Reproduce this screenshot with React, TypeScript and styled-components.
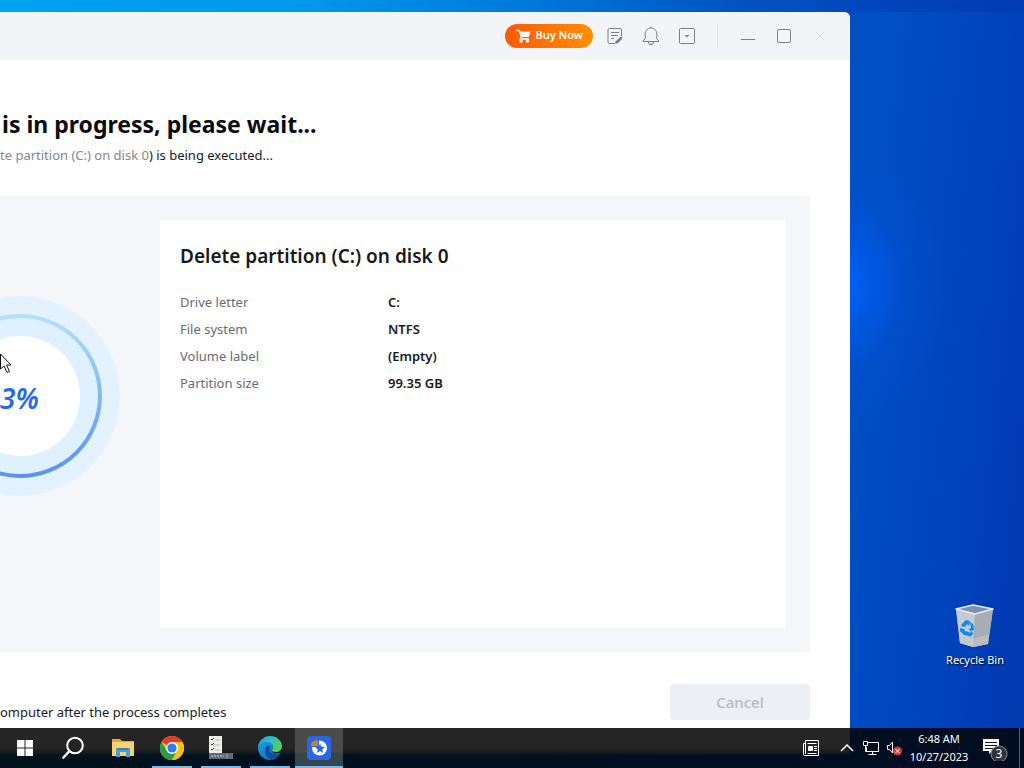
import React from "react";
import styled, { createGlobalStyle } from "styled-components";

const GlobalStyle = createGlobalStyle`
  *, *::before, *::after { box-sizing: border-box; }
  body { margin: 0; font-family: "Noto Sans", "Open Sans", sans-serif; color: #17191c; }
  button { font: inherit; border: 0; padding: 0; background: none; color: inherit; }
  h1, h2, p, dl, dd, dt { margin: 0; }
  svg { display: block; flex: none; }
`;

const Desktop = styled.div`
  position: relative;
  display: flex;
  flex-direction: column;
  height: 100vh;
  overflow: hidden;
  background:
    linear-gradient(90deg, #00a2f0 0, #0098ea 30%, #0078da 52%, #0053c4 72%, #0046bc 85%, #003cb2) top / 100% 12px no-repeat,
    radial-gradient(ellipse 100px 140px at calc(100% - 178px) 285px, #0062fa 0, rgba(0, 92, 238, 0.75) 25%, rgba(0, 84, 220, 0.3) 60%, rgba(0, 80, 208, 0) 100%),
    linear-gradient(96deg, #0050c4 0, #0050c4 80%, #0046be 89%, #003bb4 97%, #003ab0 100%);
`;

const Workspace = styled.main`
  display: flex;
  flex: 1;
  min-height: 0;
  padding-top: 12px;
`;

const AppWindow = styled.section`
  display: flex;
  flex-direction: column;
  flex: 1;
  min-width: 0;
  overflow: hidden;
  background: #fff;
  border-radius: 0 6px 0 0;
`;

const TitleBar = styled.header`
  display: flex;
  flex: none;
  align-items: center;
  justify-content: flex-end;
  height: 48px;
  padding-right: 12px;
  background: #f3f4f7;
`;

const BuyButton = styled.button`
  display: flex;
  align-items: center;
  gap: 4px;
  height: 24px;
  margin-right: 4px;
  padding: 0 10px 0 11px;
  border-radius: 12px;
  background: linear-gradient(90deg, #ff5a05, #ff8f05);
  color: #fff;
  font-size: 11px;
  font-weight: 600;
  line-height: 14px;
`;

const BuyLabel = styled.span`
  padding-bottom: 2px;
`;

const TitleButton = styled.button`
  display: flex;
  align-items: center;
  justify-content: center;
  width: 36px;
  height: 36px;
  color: #7b7f87;
`;

const TitleDivider = styled.span`
  width: 1px;
  height: 24px;
  margin: 0 12px;
  background: #dfe1e6;
`;

const Content = styled.div`
  display: flex;
  flex: 1;
  flex-direction: column;
  min-height: 0;
  padding: 47px 40px 8px 0;
`;

const Title = styled.h1`
  padding-left: 2px;
  color: #0a0b0d;
  font-size: 23px;
  font-weight: 700;
  line-height: 34px;
  white-space: nowrap;
`;

const Subtitle = styled.p`
  margin: 2px 0 29px;
  font-size: 13px;
  line-height: 24px;
  white-space: nowrap;
`;

const Muted = styled.span`
  color: #83878e;
`;

const Panel = styled.div`
  display: grid;
  flex: 1;
  grid-template-columns: 136px 1fr;
  gap: 24px;
  min-height: 0;
  padding: 24px 24px 24px 0;
  background: #f4f6fa;
`;

const Progress = styled.div`
  display: grid;
  align-self: start;
  margin-top: 76px;
  align-items: center;

  > * { grid-area: 1 / 1; }
`;

const Percent = styled.span`
  padding-top: 4px;
  color: #2a6ae8;
  font-size: 28px;
  font-style: italic;
  font-weight: 600;
  line-height: 36px;
`;

const Card = styled.div`
  padding: 20px;
  background: #fff;
`;

const CardTitle = styled.h2`
  margin-bottom: 17px;
  font-size: 19px;
  font-weight: 600;
  line-height: 32px;
`;

const Details = styled.dl`
  display: grid;
  grid-template-columns: 208px 1fr;
  font-size: 13px;
  line-height: 27px;
`;

const Term = styled.dt`
  color: #686b70;
`;

const Value = styled.dd`
  font-weight: 600;
`;

const Footer = styled.footer`
  display: flex;
  flex: none;
  align-items: flex-end;
  justify-content: space-between;
  padding-top: 32px;
`;

const FooterNote = styled.p`
  font-size: 13px;
  line-height: 16px;
`;

const CancelButton = styled.button`
  width: 140px;
  height: 36px;
  border-radius: 4px;
  background: #eceff4;
  color: #b7bac0;
  font-size: 15px;
  font-weight: 500;
`;

const Shortcuts = styled.aside`
  display: flex;
  flex: none;
  align-items: flex-end;
  justify-content: flex-end;
  width: 174px;
  padding: 0 12px 60px;
`;

const Shortcut = styled.button`
  display: flex;
  flex-direction: column;
  align-items: center;
  gap: 4px;
  width: 74px;
  color: #fff;
  font-size: 11px;
  line-height: 16px;
  white-space: nowrap;
  text-shadow: 1px 1px 2px #000;
`;

const Taskbar = styled.nav`
  display: flex;
  flex: none;
  justify-content: space-between;
  height: 40px;
  padding-left: 1px;
  color: #fff;
  background:
    linear-gradient(#252525 0 20px, #141b1f 25px, transparent 27px) left / calc(100% - 174px) 100% no-repeat,
    linear-gradient(90deg, #00121c, #001020 60%, #010c20);
`;

const TaskGroup = styled.div`
  display: flex;
  gap: 1px;
`;

const TaskButton = styled.button<{ $running?: boolean; $active?: boolean }>`
  display: flex;
  align-items: center;
  justify-content: center;
  width: 48px;
  background: ${(p) => (p.$active ? "linear-gradient(#4b4b4b 24px, #36444c 25px)" : "none")};
  position: relative;

  &::after {
    content: "";
    position: absolute;
    bottom: 0;
    left: ${(p) => (p.$active ? 0 : "4px")};
    right: ${(p) => (p.$active ? 0 : "4px")};
    height: 2px;
    background: ${(p) => (p.$running || p.$active ? "#76b9ed" : "transparent")};
  }
`;

const Tray = styled.div`
  display: flex;
  align-items: center;
`;

const TrayButton = styled.button<{ $width: number }>`
  display: flex;
  align-items: center;
  justify-content: center;
  width: ${(p) => p.$width}px;
  height: 40px;
`;

const Clock = styled.button`
  width: 66px;
  padding-left: 2px;
  font-size: 11px;
  line-height: 18px;
  text-align: center;
  white-space: nowrap;
`;

const ShowDesktop = styled.button`
  width: 5px;
  height: 40px;
  border-left: 1px solid #5c626c;
`;

const Pointer = styled.div`
  position: absolute;
  top: 353px;
  left: 0;
`;

const details = [
  ["Drive letter", "C:"],
  ["File system", "NTFS"],
  ["Volume label", "(Empty)"],
  ["Partition size", "99.35 GB"],
];

const CartIcon = () => (
  <svg width="15" height="14" viewBox="0 0 15 14" fill="none" stroke="#fff" strokeWidth="1.400">
    <path d="M.5 1.500h2.700l2.300 6.800-1.200 1.700h8.700" />
    <path d="M3.500 2.500h11L12.700 8H5.500z" fill="#fff" stroke="none" />
    <circle cx="5" cy="12" r="1" />
    <circle cx="11.500" cy="12" r="1" />
  </svg>
);

const NoteIcon = () => (
  <svg width="18" height="18" viewBox="0 0 18 18" fill="none" stroke="currentColor">
    <path d="M9 16.500H3.500a1.500 1.500 0 0 1-1.500-1.500V3a1.500 1.500 0 0 1 1.500-1.500H14A1.500 1.500 0 0 1 15.500 3v6M5 5.500h8M5 8.500h7M5 11.500h3" />
    <path d="m16.500 9.500-.5 2.500-4.500 4.500H9l.5-2 5-4.500z" fill="currentColor" stroke="none" />
  </svg>
);

const BellIcon = () => (
  <svg width="18" height="20" viewBox="0 0 18 20" fill="none" stroke="currentColor">
    <path d="M9 .5v1.500M1 15.500h16l-2.200-3V8C14.800 4.500 12.500 2 9 2S3.200 4.500 3.200 8v4.500zM6.200 15.500a2.800 3.200 0 0 0 5.600 0" />
  </svg>
);

const MenuIcon = () => (
  <svg width="18" height="18" viewBox="0 0 18 18" fill="none" stroke="currentColor">
    <rect x="1.500" y="1.500" width="15" height="15" rx="1" />
    <path d="M6.500 8h5L9 10.500z" fill="currentColor" stroke="none" />
  </svg>
);

const ProgressRing = () => (
  <svg width="120" height="200" viewBox="0 0 120 200" role="img" aria-label="Progress">
    <defs>
      <linearGradient id="arc" x1="0" y1="0" x2="0" y2="1">
        <stop offset="0" stopColor="#b4e1fb" />
        <stop offset=".5" stopColor="#7fb7f5" />
        <stop offset="1" stopColor="#5b94ee" />
      </linearGradient>
    </defs>
    <circle cx="20" cy="100" r="100" fill="#e4f2fe" />
    <circle cx="20" cy="100" r="80" fill="#dff0fe" stroke="url(#arc)" strokeWidth="4" />
    <circle cx="20" cy="100" r="60" fill="#fff" />
  </svg>
);

const RecycleIcon = () => (
  <svg width="40" height="44" viewBox="0 0 40 44">
    <path d="M1 5 18 1l20 4-5 35-15 3-13-4z" fill="#a9b4c5" />
    <path d="m1 5 19 5-2 33-13-4z" fill="#c2cad6" />
    <path d="m20 10 18-5-5 35-15 3z" fill="#a6adb8" />
    <path d="m4 31 14 4 16-5-1 10-15 3-13-4z" fill="#c9c6bf" opacity=".6" />
    <path d="m1 5 17-4 20 4-18 5z" fill="#7c90aa" stroke="#e6ebf2" strokeWidth="1.500" strokeLinejoin="round" />
    <g fill="#1587dc">
      <path d="m7 20 4-4 4 1-1 5-2-2-2 3-4-1z" />
      <path d="m15 18 3 2 1 6-4 1-1-2 2-1z" />
      <path d="m5 24 4 1 1 2 4 1v4l-5-1-4-4z" />
      <path d="m13 30 4-3 1 3-3 3z" />
    </g>
  </svg>
);

const StartIcon = () => (
  <svg width="16" height="16" viewBox="0 0 16 16" fill="#fff">
    <path d="M0 0h7.500v7.500H0zM8.500 0H16v7.500H8.500zM0 8.500h7.500V16H0zM8.500 8.500H16V16H8.500z" />
  </svg>
);

const SearchIcon = () => (
  <svg width="24" height="24" viewBox="0 0 24 24" fill="none" stroke="#fff" strokeWidth="2">
    <circle cx="13" cy="9.500" r="7.800" />
    <path d="m7.500 15-7 7.500" strokeWidth="2.500" />
  </svg>
);

const FolderIcon = () => (
  <svg width="24" height="22" viewBox="0 0 24 22">
    <path d="M1 2h8l2 2h12v4H1z" fill="#e5a52f" />
    <path d="M1 5h22v14H1z" fill="#fbd269" />
    <path d="M5 20v-9h14v9h-4v-5H9v5z" fill="#489ed6" />
    <path d="M7 11h10v2H7z" fill="#3183bd" />
  </svg>
);

const ChromeIcon = () => (
  <svg width="24" height="24" viewBox="0 0 24 24">
    <circle cx="12" cy="12" r="12" fill="#fbc116" />
    <path d="M12 12 1.600 6A12 12 0 0 1 22.400 6H12z" fill="#e33b2e" />
    <path d="M1.600 6A12 12 0 0 0 12 24l5.200-9L12 12 7 15z" fill="#2b9d48" />
    <path d="M12 24a12 12 0 0 0 10.400-18H12l5.200 9z" fill="#fbc116" />
    <circle cx="12" cy="12" r="6" fill="#fff" />
    <circle cx="12" cy="12" r="4.600" fill="#2f7de9" />
  </svg>
);

const SetupIcon = () => (
  <svg width="24" height="24" viewBox="0 0 24 24">
    <path d="M0 0h13v17H0z" fill="#eeeeec" />
    <path d="m2 3 1 1 2-2M2 8l1 1 2-2M2 13l1 1 2-2" fill="none" stroke="#333" />
    <path d="M6 4h5M6 9h5M6 14h5" stroke="#b5b5b5" />
    <path d="M0 17h24v6H0z" fill="#626a76" />
    <path d="M2 20h13" stroke="#9a9fa8" strokeWidth="2" strokeDasharray="2 1" />
    <path d="M18 18v4" stroke="#a8adb5" />
  </svg>
);

const EdgeIcon = () => (
  <svg width="24" height="24" viewBox="0 0 24 24">
    <defs>
      <linearGradient id="edgeTop" x1="0" y1="0" x2="1" y2=".5">
        <stop offset="0" stopColor="#1c9de0" />
        <stop offset=".5" stopColor="#2bbfd0" />
        <stop offset="1" stopColor="#55cf57" />
      </linearGradient>
      <linearGradient id="edgeBody" x1="0" y1="0" x2="1" y2="1">
        <stop offset="0" stopColor="#1e9be6" />
        <stop offset="1" stopColor="#1567b8" />
      </linearGradient>
    </defs>
    <path d="M0 11c0-4 4-6 7-6 5 0 8 3 8 6 0 1-1 1.500-1.500 2.500C13 16 16 18 20 17l2.500-.5C20.500 21 16.500 24 12 24 5 24 0 18.500 0 11z" fill="url(#edgeBody)" />
    <path d="M9.500 9.500c-4.500 4-2.500 12 3.500 14.500 4 0 8-3 9.500-7.500-3 2-7 2-9.500 0-1.500-1-2.500-4-.5-6z" fill="#0e4f9f" />
    <path d="M0 11C1 4 6 0 12 0c7 0 12 5 12 10 0 4-3 6-6 6-3 0-4.500-1-4.500-2 1.500-1 1.500-2 1.500-3 0-3-3-5-7-5-4 0-7 2-8 5z" fill="url(#edgeTop)" />
  </svg>
);

const PartitionIcon = () => (
  <svg width="24" height="24" viewBox="0 0 24 24">
    <rect width="24" height="24" rx="4" fill="#2c67e3" />
    <circle cx="12.500" cy="12" r="7.500" fill="#fff" />
    <path d="M3 10.500C3.500 6 7 3.500 11.500 3.500v7z" fill="#d87828" stroke="#2c67e3" />
    <path d="m13 7.500 1.300 3.300 3.700.2-2.800 2.400.9 3.600-3.100-2-3.100 2 .9-3.600L8 11l3.700-.2z" fill="#2764dc" />
  </svg>
);

const NewsIcon = () => (
  <svg width="18" height="18" viewBox="0 0 18 18" fill="none" stroke="#fff">
    <path d="M3.500 1.500h13v15h-14a1 1 0 0 1-1-1v-11h2zM3.500 4v11M5.500 4.500h9M5.500 14.500h9M12 7.500h3M12 9.500h3M12 11.500h3" />
    <path d="M6.500 7.500h4v4h-4z" fill="#fff" />
  </svg>
);

const MonitorIcon = () => (
  <svg width="18" height="16" viewBox="0 0 18 16" fill="none" stroke="#fff">
    <path d="M6 2.500h10.500v9h-12V7M10.500 11.500v3M6.500 14.500h8" />
    <path d="M1.500 1.500h4v4h-4zM3.500 5.500v6h1" />
  </svg>
);

const SpeakerIcon = () => (
  <svg width="18" height="16" viewBox="0 0 18 16">
    <path d="M2.500 5.500h2l3-3.500v11l-3-3.500h-2z" fill="none" stroke="#fff" />
    <circle cx="12.500" cy="11" r="4.500" fill="#cc3a37" />
    <path d="m10.500 9 4 4m0-4-4 4" stroke="#fff" />
  </svg>
);

const NotificationIcon = () => (
  <svg width="26" height="26" viewBox="0 0 26 26">
    <path d="M1 4h16v12H10l-3 3v-3H1z" fill="#fff" />
    <path d="M3 7.500h12M3 10.500h12M3 13.500h9" stroke="#10151f" />
    <circle cx="17" cy="19" r="8" fill="#30333a" stroke="#8b8e93" />
    <text x="17" y="23" fill="#fff" fontSize="12" textAnchor="middle">3</text>
  </svg>
);

export default function App() {
  return (
    <Desktop>
      <GlobalStyle />
      <Workspace>
        <AppWindow>
          <TitleBar>
            <BuyButton><CartIcon /><BuyLabel>Buy Now</BuyLabel></BuyButton>
            <TitleButton aria-label="Log"><NoteIcon /></TitleButton>
            <TitleButton aria-label="Notifications"><BellIcon /></TitleButton>
            <TitleButton aria-label="Menu"><MenuIcon /></TitleButton>
            <TitleDivider />
            <TitleButton aria-label="Minimize">
              <svg width="16" height="16" fill="none" stroke="currentColor"><path d="M1 11.500h14" /></svg>
            </TitleButton>
            <TitleButton aria-label="Maximize">
              <svg width="16" height="16" fill="none" stroke="currentColor"><rect x="1.500" y="1.500" width="13" height="13" rx="1.500" /></svg>
            </TitleButton>
            <TitleButton aria-label="Close" disabled>
              <svg width="10" height="10" fill="none" stroke="#d6d8dc"><path d="m1 1 8 8m0-8-8 8" /></svg>
            </TitleButton>
          </TitleBar>
          <Content>
            <Title>is in progress, please wait...</Title>
            <Subtitle><Muted>te partition (C:) on disk 0</Muted>) is being executed...</Subtitle>
            <Panel>
              <Progress>
                <ProgressRing />
                <Percent>3%</Percent>
              </Progress>
              <Card>
                <CardTitle>Delete partition (C:) on disk 0</CardTitle>
                <Details>
                  {details.map(([term, value]) => (
                    <React.Fragment key={term}>
                      <Term>{term}</Term>
                      <Value>{value}</Value>
                    </React.Fragment>
                  ))}
                </Details>
              </Card>
            </Panel>
            <Footer>
              <FooterNote>omputer after the process completes</FooterNote>
              <CancelButton disabled>Cancel</CancelButton>
            </Footer>
          </Content>
        </AppWindow>
        <Shortcuts>
          <Shortcut><RecycleIcon />Recycle Bin</Shortcut>
        </Shortcuts>
      </Workspace>
      <Taskbar>
        <TaskGroup>
          <TaskButton aria-label="Start"><StartIcon /></TaskButton>
          <TaskButton aria-label="Search"><SearchIcon /></TaskButton>
          <TaskButton aria-label="File Explorer"><FolderIcon /></TaskButton>
          <TaskButton aria-label="Chrome" $running><ChromeIcon /></TaskButton>
          <TaskButton aria-label="Setup" $running><SetupIcon /></TaskButton>
          <TaskButton aria-label="Edge" $running><EdgeIcon /></TaskButton>
          <TaskButton aria-label="Partition manager" $active><PartitionIcon /></TaskButton>
        </TaskGroup>
        <Tray>
          <TrayButton $width={48} aria-label="News"><NewsIcon /></TrayButton>
          <TrayButton $width={24} aria-label="Show hidden icons">
            <svg width="14" height="8" fill="none" stroke="#fff" strokeWidth="1.500"><path d="m1 7 6-6 6 6" /></svg>
          </TrayButton>
          <TrayButton $width={24} aria-label="Network"><MonitorIcon /></TrayButton>
          <TrayButton $width={22} aria-label="Volume"><SpeakerIcon /></TrayButton>
          <Clock>6:48 AM<br />10/27/2023</Clock>
          <TrayButton $width={48} aria-label="3 new notifications"><NotificationIcon /></TrayButton>
          <ShowDesktop aria-label="Show desktop" />
        </Tray>
      </Taskbar>
      <Pointer>
        <svg width="13" height="21" viewBox="0 0 13 21">
          <path d="M.5 1v15l3.500-3 3 6.500 2.500-1L6.500 12H11z" fill="#fff" stroke="#111" />
        </svg>
      </Pointer>
    </Desktop>
  );
}
